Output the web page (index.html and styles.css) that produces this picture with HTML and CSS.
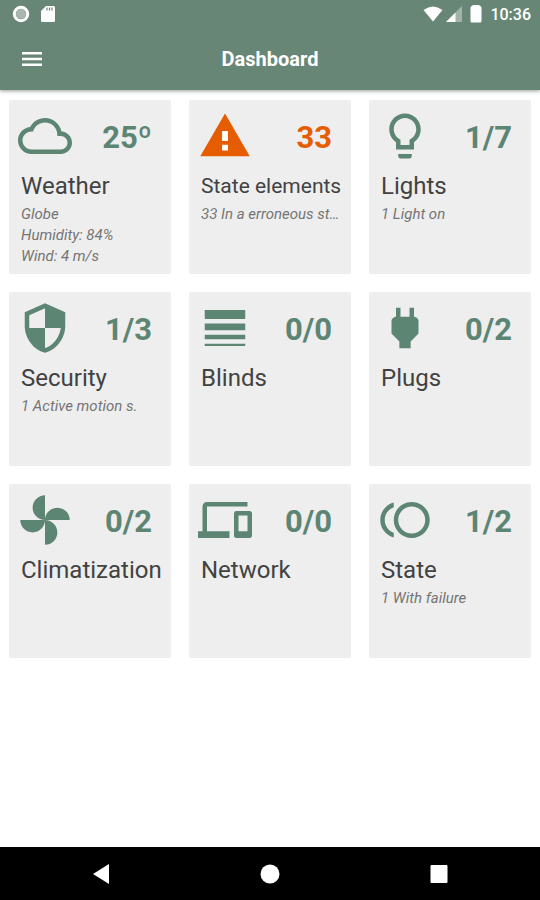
FILE: index.html
```
<!DOCTYPE html>
<html lang="en">
<head>
    <meta charset="UTF-8">
    <meta name="viewport" content="width=device-width, initial-scale=1.0">
    <title>Dashboard</title>
    <link rel="stylesheet" href="styles.css">
</head>
<body>
    <header class="header">
        <div class="status-bar">
            <div class="status-group">
                <svg class="status-icon" viewBox="0 0 18 18"><circle cx="9" cy="9" r="5" fill="#a9b8af"/><circle cx="9" cy="9" r="6.7" fill="none" stroke="#fff" stroke-width="3"/></svg>
                <svg class="status-icon" viewBox="0 0 18 18"><path fill="#fff" d="M7 1h7.500q1.500 0 1.500 1.500v13q0 1.500-1.500 1.500h-11q-1.500 0-1.500-1.500V6z"/><path stroke="#688676" stroke-width="1.200" d="M8 2.500v3M10.500 2.500v3M13 2.500v3"/></svg>
            </div>
            <div class="status-group status-right">
                <svg class="status-icon wifi" viewBox="0 0 20 18"><path fill="#fff" d="M.5 5Q10-2 19.500 5L10 16.500z"/></svg>
                <svg class="status-icon" viewBox="0 0 18 18"><path fill="#a0b3a8" d="M17 1v16H1z"/><path fill="#fff" d="M10.500 7.500V17H1z"/></svg>
                <svg class="status-icon battery" viewBox="0 0 12 18"><path fill="#fff" d="M2.500 0h7v1h.5q1.500 0 1.500 1.500V16q0 1.500-1.500 1.500H2Q.5 17.500.5 16V2.500Q.5 1 2 1h.5z"/></svg>
                <span class="time">10:36</span>
            </div>
        </div>
        <div class="app-bar">
            <button class="menu-btn" type="button" aria-label="Menu">
                <svg viewBox="0 0 24 24"><path d="M2 5h20v2.500H2zM2 10.800h20v2.500H2zM2 16.500h20V19H2z"/></svg>
            </button>
            <h1>Dashboard</h1>
        </div>
    </header>

    <main class="cards">
        <a class="card" href="#">
            <div class="card-top">
                <svg class="icon" viewBox="0 0 24 24"><path d="M19.350 10.040C18.670 6.590 15.640 4 12 4 9.110 4 6.600 5.640 5.350 8.040 2.340 8.360 0 10.910 0 14c0 3.310 2.690 6 6 6h13c2.760 0 5-2.240 5-5 0-2.640-2.050-4.780-4.650-4.960zM19 18H6c-2.210 0-4-1.790-4-4s1.790-4 4-4h.71C7.370 7.690 9.480 6 12 6c3.040 0 5.500 2.460 5.500 5.500v.5H19c1.660 0 3 1.340 3 3s-1.340 3-3 3z"/></svg>
                <span class="value">25º</span>
            </div>
            <h2>Weather</h2>
            <p>Globe</p>
            <p>Humidity: 84%</p>
            <p>Wind: 4 m/s</p>
        </a>
        <a class="card alert" href="#">
            <div class="card-top">
                <svg class="icon" viewBox="0 0 24 24"><path d="M1 21h22L12 2z"/><path fill="#fff" d="M10.700 9.800h2.600v4.400h-2.600zM10.700 15.900h2.600v2.500h-2.600z"/></svg>
                <span class="value">33</span>
            </div>
            <h2 class="long">State elements</h2>
            <p>33 In a erroneous st…</p>
        </a>
        <a class="card" href="#">
            <div class="card-top">
                <svg class="icon" viewBox="0 0 24 24"><path d="M9 21c0 .55.45 1 1 1h4c.55 0 1-.45 1-1v-1H9v1zm3-19C8.140 2 5 5.140 5 9c0 2.380 1.190 4.470 3 5.740V18h8v-3.260c1.810-1.270 3-3.360 3-5.740 0-3.860-3.140-7-7-7zm2.850 11.100l-.85.6V16h-4v-2.300l-.85-.6C7.800 12.160 7 10.630 7 9c0-2.760 2.240-5 5-5s5 2.240 5 5c0 1.630-.8 3.160-2.150 4.100z"/></svg>
                <span class="value">1/7</span>
            </div>
            <h2>Lights</h2>
            <p>1 Light on</p>
        </a>
        <a class="card" href="#">
            <div class="card-top">
                <svg class="icon" viewBox="0 0 24 24"><path d="M12 1L3 5v6c0 5.550 3.840 10.740 9 12 5.160-1.260 9-6.450 9-12V5l-9-4zm0 10.990h7c-.53 4.120-3.280 7.790-7 8.940V12H5V6.300l7-3.110v8.800z"/></svg>
                <span class="value">1/3</span>
            </div>
            <h2>Security</h2>
            <p>1 Active motion s.</p>
        </a>
        <a class="card" href="#">
            <div class="card-top">
                <svg class="icon" viewBox="0 0 24 24"><path d="M3 4h18v4H3zM3 10h18v3H3zM3 15h18v2H3zM3 19h18v1H3z"/></svg>
                <span class="value">0/0</span>
            </div>
            <h2>Blinds</h2>
        </a>
        <a class="card" href="#">
            <div class="card-top">
                <svg class="icon" viewBox="0 0 24 24"><path d="M16.010 7L16 3h-2v4h-4V3H8v4h-.01C7 6.990 6 7.990 6 8.990v5.490L9.500 18v3h5v-3l3.500-3.510v-5.500c0-1-1-2-1.990-1.990z"/></svg>
                <span class="value">0/2</span>
            </div>
            <h2>Plugs</h2>
        </a>
        <a class="card" href="#">
            <div class="card-top">
                <svg class="icon" viewBox="0 0 24 24"><path d="M12 12c0-3 2.500-5.500 5.500-5.500S23 9 23 12H12zm0 0c0 3-2.500 5.500-5.500 5.500S1 15 1 12h11zm0 0c-3 0-5.500-2.500-5.500-5.500S9 1 12 1v11zm0 0c3 0 5.500 2.500 5.500 5.500S15 23 12 23V12z"/></svg>
                <span class="value">0/2</span>
            </div>
            <h2>Climatization</h2>
        </a>
        <a class="card" href="#">
            <div class="card-top">
                <svg class="icon" viewBox="0 0 24 24"><path d="M4 6h18V4H4c-1.100 0-2 .9-2 2v11H0v3h14v-3H4V6zm19 2h-6c-.55 0-1 .45-1 1v10c0 .55.45 1 1 1h6c.55 0 1-.45 1-1V9c0-.55-.45-1-1-1zm-1 9h-4v-7h4v7z"/></svg>
                <span class="value">0/0</span>
            </div>
            <h2>Network</h2>
        </a>
        <a class="card" href="#">
            <div class="card-top">
                <svg class="icon" viewBox="0 0 24 24"><path d="M15 4c-4.420 0-8 3.580-8 8s3.580 8 8 8 8-3.580 8-8-3.580-8-8-8zm0 14c-3.310 0-6-2.690-6-6s2.690-6 6-6 6 2.690 6 6-2.690 6-6 6zM3 12c0-2.610 1.670-4.830 4-5.650V4.260C3.550 5.150 1 8.270 1 12s2.550 6.850 6 7.740v-2.090c-2.330-.82-4-3.040-4-5.650z"/></svg>
                <span class="value">1/2</span>
            </div>
            <h2>State</h2>
            <p>1 With failure</p>
        </a>
    </main>

    <nav class="nav-bar">
        <button type="button" aria-label="Back"><svg viewBox="0 0 20 20"><path d="M18 0v20L2 10z"/></svg></button>
        <button type="button" aria-label="Home"><svg viewBox="0 0 20 20"><circle cx="10" cy="10" r="9.500"/></svg></button>
        <button type="button" aria-label="Recent apps"><svg viewBox="0 0 20 20"><rect x="1.500" y="1" width="17" height="18" rx="1"/></svg></button>
    </nav>
</body>
</html>
```
FILE: styles.css
```
* {
    box-sizing: border-box;
}

body {
    font-family: Roboto, "Liberation Sans", sans-serif;
    background-color: #fff;
    color: #424242;
    display: flex;
    flex-direction: column;
    min-height: 100vh;
    margin: 0;
}

h1, h2, p {
    margin: 0;
}

button {
    background: none;
    border: none;
    padding: 0;
    cursor: pointer;
}

svg {
    display: block;
}

.header {
    background-color: #688676;
    color: #fff;
    box-shadow: 0 1px 4px rgba(0,0,0,0.4);
}

.status-bar {
    display: flex;
    justify-content: space-between;
    align-items: center;
    height: 28px;
    padding: 0 9px 0 12px;
}

.status-group {
    display: flex;
    align-items: center;
    gap: 9px;
}

.status-right {
    gap: 2px;
}

.status-icon {
    width: 18px;
    height: 18px;
}

.status-icon.wifi {
    width: 20px;
}

.status-icon.battery {
    width: 12px;
    margin: 0 6px 0 5px;
}

.time {
    font-size: 16px;
    font-weight: 500;
}

.app-bar {
    display: grid;
    grid-template-columns: 24px 1fr 24px;
    align-items: center;
    height: 62px;
    padding: 0 20px;
}

.app-bar h1 {
    font-size: 20px;
    font-weight: 700;
    text-align: center;
}

.menu-btn svg {
    width: 24px;
    height: 24px;
    fill: #fff;
}

.cards {
    flex: 1;
    display: grid;
    grid-template-columns: repeat(3, minmax(0, 1fr));
    grid-auto-rows: minmax(174px, auto);
    align-content: start;
    gap: 18px;
    padding: 10px 9px;
}

.card {
    background-color: #eee;
    border-radius: 2px;
    color: inherit;
    padding: 9px 3px 4px 12px;
    text-decoration: none;
}

.card-top {
    display: flex;
    justify-content: space-between;
    align-items: center;
    margin: 0 16px 7px -3px;
    color: #5d8573;
}

.alert .card-top {
    color: #e65c00;
}

.icon {
    width: 54px;
    height: 54px;
    fill: currentColor;
}

.value {
    font-size: 31px;
    font-weight: 700;
    padding-top: 2px;
}

.card h2 {
    font-size: 24px;
    font-weight: 400;
    line-height: 32px;
    margin-bottom: 2px;
    white-space: nowrap;
}

.card h2.long {
    font-size: 21px;
}

.card p {
    color: #757575;
    font-size: 15px;
    font-style: italic;
    line-height: 21px;
    white-space: nowrap;
}

.nav-bar {
    display: flex;
    justify-content: center;
    gap: 149px;
    background-color: #000;
    height: 53px;
}

.nav-bar svg {
    width: 20px;
    height: 20px;
    fill: #fff;
}
```
